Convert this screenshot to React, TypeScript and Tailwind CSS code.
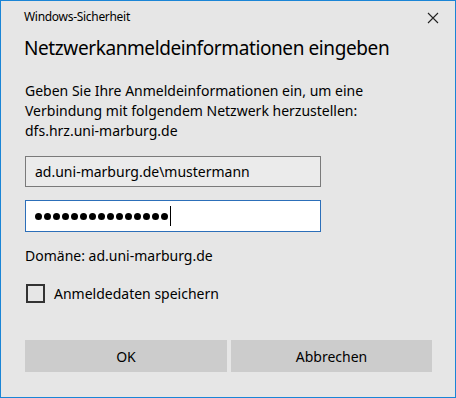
const dots = Array.from({ length: 15 });

export default function App() {
  return (
    <div className="w-[456px] h-[398px] bg-[#e6e6e6] border border-[#1a85d6] flex flex-col font-['Noto_Sans',sans-serif] text-black overflow-hidden">
      <div className="flex items-start justify-between pl-[23px] pr-[16px] pt-[8px]">
        <span className="text-[12px] leading-[16px] tracking-[-0.3px]">Windows-Sicherheit</span>
        <svg width="12" height="12" viewBox="0 0 12 12" className="mt-[3px]">
          <path d="M1 1L11 11M11 1L1 11" stroke="#222" strokeWidth="1.1" />
        </svg>
      </div>

      <h1 className="pl-[23px] mt-[9px] text-[19px] leading-[28px] tracking-[-0.4px]">
        Netzwerkanmeldeinformationen eingeben
      </h1>

      <p className="pl-[24px] mt-[19px] text-[14px] leading-[20px]">
        Geben Sie Ihre Anmeldeinformationen ein, um eine
        <br />
        Verbindung mit folgendem Netzwerk herzustellen:
        <br />
        dfs.hrz.uni-marburg.de
      </p>

      <div className="ml-[24px] mt-[15px] w-[296px] h-[31px] border border-[#7a7a7a] bg-[#ebebeb] flex items-center px-[9px] text-[14px]">
        ad.uni-marburg.de\mustermann
      </div>

      <div className="ml-[24px] mt-[13px] w-[296px] h-[32px] border border-[#2c6fb9] bg-white flex items-center px-[9px]">
        <div className="flex gap-[2px]">
          {dots.map((_, i) => (
            <span key={i} className="w-[7px] h-[7px] rounded-full bg-black" />
          ))}
        </div>
        <span className="ml-[2px] w-px h-[20px] bg-black" />
      </div>

      <div className="pl-[24px] mt-[14px] text-[14px] leading-[20px]">
        Domäne: ad.uni-marburg.de
      </div>

      <label className="pl-[25px] mt-[17px] flex items-center gap-[9px] text-[14px]">
        <span className="w-[19px] h-[19px] border-2 border-[#333333] box-border" />
        <span>Anmeldedaten speichern</span>
      </label>

      <div className="mt-[36px] pl-[24px] flex gap-[4px]">
        <button className="w-[202px] h-[32px] bg-[#cccccc] text-[14px]">OK</button>
        <button className="w-[201px] h-[32px] bg-[#cccccc] text-[14px]">Abbrechen</button>
      </div>
    </div>
  );
}
